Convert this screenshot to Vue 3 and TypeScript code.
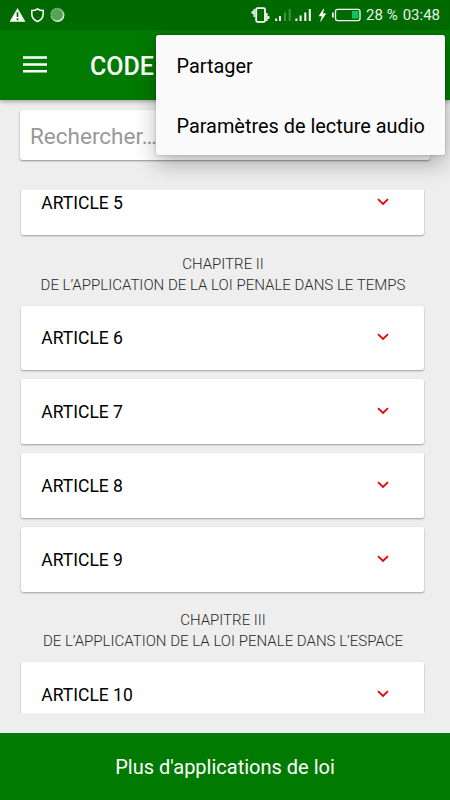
<script setup lang="ts">
interface Section {
  id: number
  heading?: string[]
  articles: number[]
}

const sections: Section[] = [
  { id: 1, articles: [5] },
  {
    id: 2,
    heading: ['CHAPITRE II', 'DE L’APPLICATION DE LA LOI PENALE DANS LE TEMPS'],
    articles: [6, 7, 8, 9],
  },
  {
    id: 3,
    heading: ['CHAPITRE III', 'DE L’APPLICATION DE LA LOI PENALE DANS L’ESPACE'],
    articles: [10],
  },
]

const menuItems: string[] = ['Partager', 'Paramètres de lecture audio']
</script>

<template>
  <div class="screen">
    <div class="status">
      <svg class="status-left" width="60" height="30" viewBox="0 0 60 30">
        <path d="M7.5 8.5 L15 21.5 H0 Z" fill="#fff" stroke="#fff" stroke-width=".5" stroke-linejoin="round" />
        <path d="M7.5 12.3 V17 M7.5 18.3 V20.2" stroke="#006a00" stroke-width="1.7" />
        <path d="M27.5 8.8 C25.6 10.2 23.8 10.5 21.8 10.5 V14 C21.8 17.7 24 20 27.5 21.5 C31 20 33.2 17.7 33.2 14 V10.5 C31.2 10.5 29.4 10.2 27.5 8.8 Z" fill="none" stroke="#fff" stroke-width="1.5" />
        <circle cx="47.7" cy="15.3" r="6.7" fill="#e2f1e2" />
        <circle cx="47" cy="14.5" r="6.1" fill="#59a259" />
        <circle cx="47" cy="14.5" r="6.1" fill="none" stroke="#9bca9b" stroke-width="1.2" stroke-dasharray="1 1" />
      </svg>
      <div class="status-right">
        <svg width="112" height="30" viewBox="0 0 112 30">
          <rect x="5.2" y="8.1" width="8.8" height="13.8" rx="1.3" fill="none" stroke="#fff" stroke-width="1.8" />
          <path d="M3.3 9 V17 M1.5 11 V14 M15.8 13 V21 M17.6 16 V19" stroke="#d8ead8" stroke-width="1.8" />
          <path d="M25.2 18.5 V21 M29 16 V21" stroke="#fff" stroke-width="2" />
          <path d="M34 12.5 V21 M38.7 9 V21" stroke="#409340" stroke-width="2" />
          <path d="M45.4 18.5 V21 M49.6 15.5 V21 M54.3 12.5 V21 M58.8 9 V21" stroke="#fff" stroke-width="2" />
          <path d="M72.7 8.8 L68 16 H71.2 L69.6 21.4 L74.8 13.7 H71.7 Z" fill="#fff" stroke="#fff" stroke-width=".5" />
          <path d="M81.9 12.5 V17.5" stroke="#fff" stroke-width="1.6" />
          <rect x="84.5" y="9.4" width="24.5" height="11.2" rx="2" fill="none" stroke="#fff" stroke-width="1.3" />
          <rect x="101" y="11" width="6.4" height="7.5" fill="#12c35b" />
        </svg>
        <span class="battery">28 %</span>
        <span class="clock">03:48</span>
      </div>
    </div>

    <header class="toolbar">
      <svg width="24" height="17" viewBox="0 0 24 17">
        <path d="M0 1.5 H24 M0 8.5 H24 M0 15.3 H24" stroke="#fff" stroke-width="2.6" />
      </svg>
      <h1>CODE</h1>
    </header>

    <div class="search"><span>Rechercher…</span></div>

    <main class="list">
      <section v-for="section in sections" :key="section.id">
        <h2 v-if="section.heading" class="chapter">
          <span v-for="line in section.heading" :key="line">{{ line }}</span>
        </h2>
        <div class="cards">
          <article v-for="n in section.articles" :key="n" class="card">
            <span>ARTICLE {{ n }}</span>
            <svg width="12" height="8" viewBox="0 0 12 8">
              <path d="M1 1.2 L6 6 L11 1.2" fill="none" stroke="#f00000" stroke-width="1.8" />
            </svg>
          </article>
        </div>
      </section>
    </main>

    <footer class="more">Plus d'applications de loi</footer>

    <nav class="menu">
      <div v-for="item in menuItems" :key="item" class="menu-item">{{ item }}</div>
    </nav>
  </div>
</template>

<style>
body {
  margin: 0;
  overflow: hidden;
}
</style>

<style scoped>
.screen {
  position: relative;
  display: flex;
  flex-direction: column;
  width: 450px;
  height: 800px;
  overflow: hidden;
  background: #eee;
  font-family: Roboto, 'Liberation Sans', sans-serif;
  color: #000;
}
.status {
  flex: none;
  display: flex;
  justify-content: space-between;
  height: 30px;
  padding: 0 10px;
  background: #006a00;
  color: #e8f3e8;
  position: relative;
  z-index: 1;
}
.status-right {
  display: flex;
  align-items: center;
  font-size: 15px;
  line-height: 32px;
  white-space: nowrap;
}
.battery {
  margin-left: 2.6px;
}
.clock {
  margin-left: 5px;
}
.toolbar {
  flex: none;
  display: flex;
  align-items: center;
  height: 70px;
  box-sizing: border-box;
  padding-left: 23px;
  background: #007a00;
  color: #fff;
  box-shadow: 0 1px 5px rgba(0, 0, 0, 0.4);
}
.toolbar svg {
  margin-top: -1px;
}
h1 {
  margin: 3px 0 0 43px;
  font-size: 25px;
  font-weight: 500;
}
.search {
  flex: none;
  display: flex;
  align-items: center;
  height: 50px;
  margin: 10px 20px 0;
  padding: 0 10px;
  box-sizing: border-box;
  border-radius: 2.5px;
  background: #fff;
  box-shadow: 0 1px 2px rgba(0, 0, 0, 0.4);
  color: #999;
  font-size: 22.5px;
}
.search span {
  padding-top: 2px;
}
.list {
  flex: none;
  height: 523px;
  margin-top: 30px;
  overflow: hidden;
}
.list section:first-child {
  margin-top: -19.9px;
}
.cards {
  display: flex;
  flex-direction: column;
  gap: 9px;
  padding: 0 26px 0 21.3px;
}
.card {
  flex: none;
  display: flex;
  align-items: center;
  justify-content: space-between;
  height: 64.8px;
  box-sizing: border-box;
  padding: 1px 35.5px 0 20px;
  border-radius: 2.5px;
  background: #fff;
  box-shadow: 0 1px 2px rgba(0, 0, 0, 0.34);
  font-size: 17.5px;
}
.card svg {
  margin-bottom: 2.5px;
}
.chapter {
  display: flex;
  flex-direction: column;
  align-items: center;
  height: 70.6px;
  box-sizing: border-box;
  margin: 0;
  padding: 18.6px 4px 0 0;
  color: #2a2a2a;
  font-size: 15.04px;
  font-weight: 300;
  line-height: 21px;
  white-space: nowrap;
}
.more {
  flex: none;
  height: 67px;
  margin-top: 20px;
  background: #007a00;
  color: #fff;
  font-size: 20px;
  line-height: 69px;
  text-align: center;
}
.menu {
  position: absolute;
  z-index: 2;
  top: 35px;
  left: 156px;
  width: 289px;
  height: 120px;
  border-radius: 2.5px;
  background: #fafafa;
  box-shadow: 0 9px 22px rgba(0, 0, 0, 0.28), 0 0 3px rgba(0, 0, 0, 0.22);
}
.menu-item {
  height: 60px;
  padding-left: 20.5px;
  font-size: 19.9px;
  line-height: 63px;
  white-space: nowrap;
}
</style>
